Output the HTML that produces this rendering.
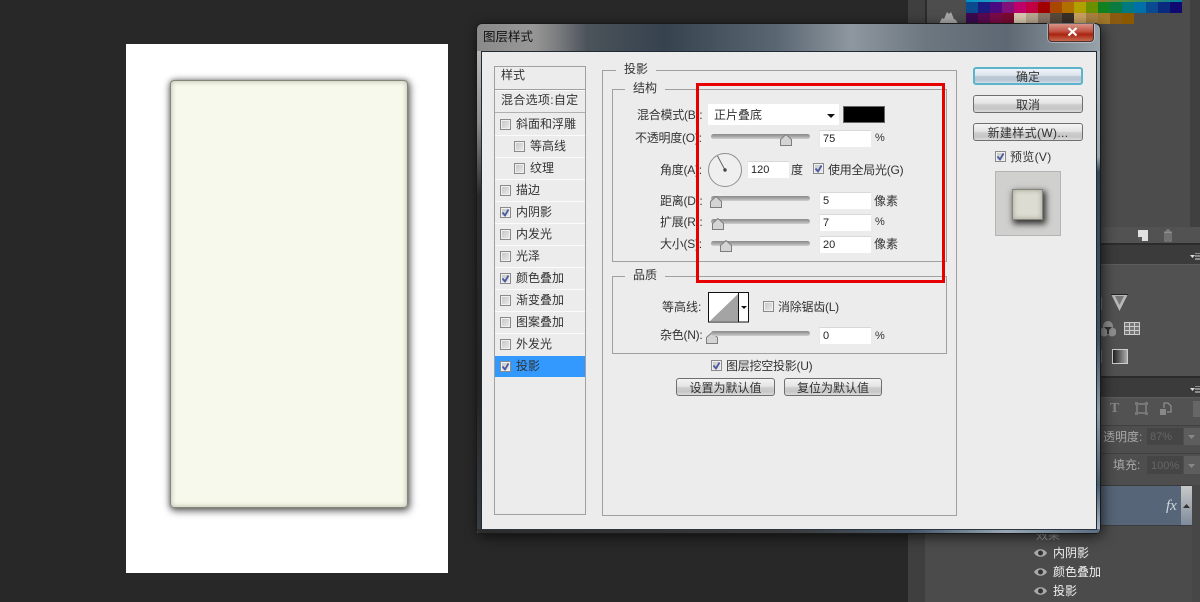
<!DOCTYPE html>
<html><head><meta charset="utf-8"><style>
html,body{margin:0;padding:0;background:#282828}
#r{position:relative;width:1200px;height:602px;overflow:hidden;background:#282828;font-family:"Liberation Sans","Noto Sans CJK SC",sans-serif;font-size:12px;color:#333}
#r div,#r span.t,#r svg{position:absolute}
.t{white-space:nowrap;line-height:16px;font-size:12px;color:#333}
.n{letter-spacing:-.25px}
.cb{width:9px;height:9px;border:1px solid #8a8a8a;background:linear-gradient(135deg,#c4c4c4,#ececec);box-shadow:inset 0 0 0 1px #f0f0f0}
.gb{border:1px solid #a0a0a0;box-sizing:border-box}
.lg{background:#ececec;padding:0 8px;height:16px;line-height:16px;white-space:nowrap}
.sl{left:711px;width:99px;height:5px;border-radius:3px;background:linear-gradient(#8a8a8a,#a8a8a8 50%,#d0d0d0)}
.in{background:#fff;box-sizing:border-box;border-top:1px solid #d8d8d8;border-left:1px solid #e8e8e8;padding-left:3px;line-height:17px;font-size:11px;color:#222}
.bt{border:1px solid #6f6f6f;border-radius:3px;box-sizing:border-box;background:linear-gradient(#f4f4f4,#e4e4e4 45%,#cdcdcd 55%,#c6c6c6 80%,#dcdcdc);text-align:center;line-height:18px;white-space:nowrap;font-size:12px;color:#333}
.sep{left:495px;width:90px;height:1px;background:#fbfbfb}
</style></head><body><div id="r">

<!-- right panels -->
<div style="left:908px;top:0;width:292px;height:602px;background:#4c4c4c"></div>
<div style="left:908px;top:0;width:17px;height:602px;background:#3f3f3f"></div>
<div style="left:925px;top:0;width:2px;height:602px;background:#2c2c2c"></div>
<div style="left:927px;top:0;width:37px;height:30px;background:#4d4d4d"></div>
<div style="left:1190px;top:0;width:10px;height:243px;background:#404040"></div>

<!-- swatches -->
<div style="left:966px;top:0;width:216px;height:2px;background:linear-gradient(90deg,#0090c8 0,#2aa0c0 15%,#803070 35%,#c06020 55%,#509040 75%,#0080a0 100%)"></div>
<svg style="left:966px;top:2px" width="216" height="22" shape-rendering="crispEdges">
<g>
<rect x="0" y="0" width="12" height="11" fill="#0a4a8e"/><rect x="12" y="0" width="12" height="11" fill="#1a1a80"/><rect x="24" y="0" width="12" height="11" fill="#4a0a80"/><rect x="36" y="0" width="12" height="11" fill="#80107a"/><rect x="48" y="0" width="12" height="11" fill="#c0006a"/><rect x="60" y="0" width="12" height="11" fill="#c00040"/><rect x="72" y="0" width="12" height="11" fill="#a00000"/><rect x="84" y="0" width="12" height="11" fill="#a84800"/><rect x="96" y="0" width="12" height="11" fill="#b07000"/><rect x="108" y="0" width="12" height="11" fill="#b0a000"/><rect x="120" y="0" width="12" height="11" fill="#6a9000"/><rect x="132" y="0" width="12" height="11" fill="#108020"/><rect x="144" y="0" width="12" height="11" fill="#0a7a40"/><rect x="156" y="0" width="12" height="11" fill="#007a80"/><rect x="168" y="0" width="12" height="11" fill="#0070a8"/><rect x="180" y="0" width="12" height="11" fill="#0a4a90"/><rect x="192" y="0" width="12" height="11" fill="#0a2a80"/><rect x="204" y="0" width="12" height="11" fill="#100a70"/>
<rect x="0" y="11" width="12" height="11" fill="#3a0a50"/><rect x="12" y="11" width="12" height="11" fill="#5a0a50"/><rect x="24" y="11" width="12" height="11" fill="#7a0a48"/><rect x="36" y="11" width="12" height="11" fill="#7a0a30"/><rect x="48" y="11" width="12" height="11" fill="#d8c8b0"/><rect x="60" y="11" width="12" height="11" fill="#b8a890"/><rect x="72" y="11" width="12" height="11" fill="#8a7868"/><rect x="84" y="11" width="12" height="11" fill="#5a4a3a"/><rect x="96" y="11" width="12" height="11" fill="#3a3028"/><rect x="108" y="11" width="12" height="11" fill="#c8a060"/><rect x="120" y="11" width="12" height="11" fill="#a88040"/><rect x="132" y="11" width="12" height="11" fill="#a07828"/><rect x="144" y="11" width="12" height="11" fill="#8a5a10"/><rect x="156" y="11" width="12" height="11" fill="#8a5800"/>
</g></svg>
<svg style="left:938px;top:11px" width="20" height="13"><path d="M1 13 L4 7 L6 8 L9 1 L11 3 L13 1 L16 8 L18 9 L20 13Z" fill="#a8a8a8"/></svg>

<!-- panel bars -->
<div style="left:1100px;top:227px;width:100px;height:16px;background:#525252"></div>
<div style="left:1100px;top:243px;width:100px;height:2px;background:#2c2c2c"></div>
<div style="left:1100px;top:245px;width:100px;height:19px;background:#3b3b3b"></div>
<div style="left:1100px;top:264px;width:100px;height:112px;background:#515151;border-top:1px solid #5c5c5c"></div>
<div style="left:1100px;top:376px;width:100px;height:2px;background:#2c2c2c"></div>
<div style="left:1100px;top:378px;width:100px;height:19px;background:#3b3b3b"></div>
<div style="left:1100px;top:397px;width:100px;height:28px;background:#525252;border-top:1px solid #5c5c5c"></div>
<div style="left:1100px;top:425px;width:100px;height:28px;background:#4e4e4e;border-top:1px solid #404040"></div>
<div style="left:1100px;top:453px;width:100px;height:32px;background:#4e4e4e;border-top:1px solid #404040"></div>
<div style="left:1000px;top:485px;width:192px;height:40px;background:#566678;border-top:1px solid #3a3a3a"></div>
<div style="left:1181px;top:486px;width:11px;height:39px;background:linear-gradient(#c8c8c8,#7f8c9c)"></div>
<div style="left:1192px;top:485px;width:8px;height:117px;background:#474747"></div>
<div style="left:925px;top:525px;width:267px;height:77px;background:#4b4b4b;border-top:1px solid #3c3c3c"></div>

<svg style="left:1136px;top:229px" width="46" height="14"><path d="M2 1H12V12H6L2 8Z" fill="#e0e0e0"/><path d="M2 8H6V12Z" fill="#555"/><path d="M28 3H36M31 3V1H33V3M29 4H35V12H29Z" fill="none" stroke="#8f8f8f"/><path d="M31 5V11M33 5V11" stroke="#8f8f8f"/></svg>
<svg style="left:1190px;top:253px" width="10" height="8"><path d="M0 2H5L2.500 5Z" fill="#ddd"/><path d="M5 0H10M5 3H10M5 6H10" stroke="#ddd"/></svg>
<svg style="left:1190px;top:386px" width="10" height="8"><path d="M0 2H5L2.500 5Z" fill="#ddd"/><path d="M5 0H10M5 3H10M5 6H10" stroke="#ddd"/></svg>
<svg style="left:1111px;top:294px" width="18" height="18"><path d="M0 0H17L8.500 17Z" fill="#b8b8b8"/><path d="M4 2H13L8.500 11Z" fill="#777"/><path d="M0 .5H17" stroke="#222"/></svg>
<svg style="left:1100px;top:321px" width="16" height="16"><circle cx="8" cy="5" r="5" fill="#8e8e8e"/><circle cx="4" cy="11" r="4.500" fill="#8e8e8e"/><circle cx="12" cy="11" r="4.500" fill="#8e8e8e"/><path d="M4 6H12L9 9V13H7V9Z" fill="#333"/></svg>
<svg style="left:1124px;top:322px" width="16" height="14" shape-rendering="crispEdges"><rect x=".5" y=".5" width="15" height="12" fill="#777" stroke="#ccc"/><path d="M.5 4.500H15.500M.5 8.500H15.500M5.500 .5V12.500M10.500 .5V12.500" stroke="#ccc"/></svg>
<div style="left:1112px;top:349px;width:14px;height:13px;border:1px solid #ccc;background:linear-gradient(90deg,#222,#aaa)"></div>
<div style="left:1100px;top:350px;width:2px;height:13px;background:#777"></div>
<div style="left:1100px;top:297px;width:2px;height:13px;background:#777"></div>

<span class="t" style="left:1110px;top:401px;font-family:'Liberation Serif',serif;font-weight:bold;font-size:14px;color:#888">T</span>
<svg style="left:1135px;top:402px" width="14" height="14"><rect x="2" y="2" width="9" height="9" fill="none" stroke="#999"/><path d="M0 0h3v3H0zM10 0h3v3h-3zM0 10h3v3H0zM10 10h3v3h-3z" fill="#777"/></svg>
<svg style="left:1159px;top:402px" width="14" height="14"><path d="M5 6V1H9L12 4V10H8" fill="none" stroke="#999"/><rect x="1" y="7" width="6" height="6" fill="#888"/></svg>
<div style="left:1193px;top:401px;width:7px;height:16px;background:#666"></div>

<span class="t" style="left:1103px;top:429px;color:#a8a8a8">透明度:</span>
<div style="left:1147px;top:428px;width:36px;height:17px;background:#454545"></div>
<span class="t" style="left:1150px;top:429px;color:#666;font-size:11px">87%</span>
<div style="left:1184px;top:428px;width:16px;height:17px;background:#5d5d5d"></div>
<svg style="left:1188px;top:435px" width="8" height="4"><path d="M0 0H7L3.500 4Z" fill="#888"/></svg>
<span class="t" style="left:1113px;top:457px;color:#a8a8a8">填充:</span>
<div style="left:1147px;top:456px;width:36px;height:18px;background:#454545"></div>
<span class="t" style="left:1151px;top:458px;color:#666;font-size:11px">100%</span>
<div style="left:1184px;top:456px;width:16px;height:18px;background:#5d5d5d"></div>
<svg style="left:1188px;top:464px" width="8" height="4"><path d="M0 0H7L3.500 4Z" fill="#888"/></svg>
<span class="t" style="left:1166px;top:498px;font-family:'Liberation Serif',serif;font-style:italic;font-size:15px;color:#d0d8e0">fx</span>
<svg style="left:1183px;top:504px" width="7" height="4"><path d="M0 4H7L3.500 0Z" fill="#333"/></svg>

<span class="t" style="left:1036px;top:527px;color:#9a9a9a">效果</span>
<span class="t" style="left:1053px;top:545px;color:#f0f0f0">内阴影</span>
<span class="t" style="left:1053px;top:564px;color:#f0f0f0">颜色叠加</span>
<span class="t" style="left:1053px;top:583px;color:#f0f0f0">投影</span>
<svg style="left:1034px;top:548px" width="13" height="50"><g fill="#aaa"><path d="M0 5C3 0 10 0 13 5C10 10 3 10 0 5Z"/><path d="M0 24C3 19 10 19 13 24C10 29 3 29 0 24Z"/><path d="M0 43C3 38 10 38 13 43C10 48 3 48 0 43Z"/></g><g fill="#333"><circle cx="6.500" cy="5" r="2.500"/><circle cx="6.500" cy="24" r="2.500"/><circle cx="6.500" cy="43" r="2.500"/></g></svg>

<!-- canvas -->
<div style="left:126px;top:44px;width:322px;height:529px;background:#fff"></div>
<div style="left:170px;top:80px;width:238px;height:428px;box-sizing:border-box;border-radius:4px;background:#f7f9ec;box-shadow:1px 2px 8px 1px rgba(0,0,0,.6),0 0 5px rgba(0,0,0,.25),inset 0 0 0 1px #85857c,inset 0 0 5px 2px #c6c7b6"></div>

<!-- dialog -->
<div style="left:477px;top:24px;width:623px;height:509px;border-radius:5px;box-shadow:0 0 0 1px #1a1a1a,2px 3px 14px rgba(0,0,0,.7);background:linear-gradient(90deg,#4a4a4a 0,#686868 8%,#4e555c 16%,#36424e 30%,#5a6672 48%,#8e979f 60%,#6d7780 72%,#5d6873 85%,#98a2aa 100%)"></div>
<div style="left:477px;top:24px;width:110px;height:27px;border-radius:5px 0 0 0;background:linear-gradient(90deg,#8a8a8a,#979797 50%,rgba(120,120,120,0))"></div>
<div style="left:477px;top:51px;width:4px;height:482px;background:linear-gradient(#b8b8b8,#8a8a8a 15%,#2a2a2a 30%,#232323 70%,#3a3f44)"></div>
<div style="left:1096px;top:51px;width:4px;height:482px;border-radius:0 0 4px 0;background:linear-gradient(#a8b2ba 0,#9aa6b0 22%,#34465a 25%,#3e5064 60%,#8a9aa8 75%,#4a5c70 90%,#b0bcc8)"></div>
<div style="left:477px;top:529px;width:623px;height:4px;border-radius:0 0 5px 5px;background:linear-gradient(90deg,#2c2c2c 0,#3a3a3a 50%,#46576a 70%,#9aa8b4 85%,#5a6c80)"></div>
<div style="left:481px;top:51px;width:614px;height:477px;background:#ececec;border:1px solid #1f2a34;border-bottom-color:#2a3642"></div>
<span class="t" style="left:483px;top:29px;color:#111;font-size:12.500px">图层样式</span>

<!-- close -->
<div style="left:1048px;top:24px;width:46px;height:18px;box-sizing:border-box;border:1px solid #4a3030;border-top:0;border-radius:0 0 4px 4px;background:linear-gradient(#d89488,#c05040 45%,#a82410 60%,#c86a50);box-shadow:0 0 0 1px rgba(255,255,255,.35)"></div>
<svg style="left:1067px;top:27px" width="11" height="10"><path d="M1.500 1L9.500 8.500M9.500 1L1.500 8.500" stroke="#fff" stroke-width="2.200"/></svg>

<!-- left list -->
<div class="gb" style="left:494px;top:66px;width:92px;height:449px"></div>
<span class="t" style="left:501px;top:67px">样式</span>
<div style="left:495px;top:89px;width:90px;height:1px;background:#a0a0a0"></div>
<div style="left:495px;top:90px;width:90px;height:1px;background:#fbfbfb"></div>
<span class="t" style="left:501px;top:92px;letter-spacing:.3px">混合选项:自定</span>
<div class="sep" style="top:112px;background:#b0b0b0"></div>
<div class="sep" style="top:135px"></div><div class="sep" style="top:157px"></div><div class="sep" style="top:179px"></div><div class="sep" style="top:201px"></div><div class="sep" style="top:223px"></div><div class="sep" style="top:245px"></div><div class="sep" style="top:267px"></div><div class="sep" style="top:289px"></div><div class="sep" style="top:311px"></div><div class="sep" style="top:333px"></div>
<div style="left:495px;top:356px;width:90px;height:21px;background:#3399ff"></div>

<div class="cb" style="left:500px;top:119px"></div><span class="t" style="left:516px;top:116px">斜面和浮雕</span>
<div class="cb" style="left:514px;top:141px"></div><span class="t" style="left:530px;top:138px">等高线</span>
<div class="cb" style="left:514px;top:163px"></div><span class="t" style="left:530px;top:160px">纹理</span>
<div class="cb" style="left:500px;top:185px"></div><span class="t" style="left:516px;top:182px">描边</span>
<div class="cb" style="left:500px;top:207px"></div><span class="t" style="left:516px;top:204px">内阴影</span>
<div class="cb" style="left:500px;top:229px"></div><span class="t" style="left:516px;top:226px">内发光</span>
<div class="cb" style="left:500px;top:251px"></div><span class="t" style="left:516px;top:248px">光泽</span>
<div class="cb" style="left:500px;top:273px"></div><span class="t" style="left:516px;top:270px">颜色叠加</span>
<div class="cb" style="left:500px;top:295px"></div><span class="t" style="left:516px;top:292px">渐变叠加</span>
<div class="cb" style="left:500px;top:317px"></div><span class="t" style="left:516px;top:314px">图案叠加</span>
<div class="cb" style="left:500px;top:339px"></div><span class="t" style="left:516px;top:336px">外发光</span>
<div class="cb" style="left:500px;top:361px"></div><span class="t" style="left:516px;top:358px">投影</span>
<svg style="left:500px;top:207px" width="11" height="176"><g fill="none" stroke="#4a5aa0" stroke-width="1.800"><path d="M2.500 5.500L5 8.500L8.500 2.500"/><path d="M2.500 71.500L5 74.500L8.500 68.500"/><path d="M2.500 159.500L5 162.500L8.500 156.500"/></g></svg>

<!-- main groups -->
<div class="gb" style="left:602px;top:70px;width:355px;height:446px"></div>
<div class="lg" style="left:616px;top:61px">投影</div>
<div class="gb" style="left:612px;top:89px;width:335px;height:173px"></div>
<div class="lg" style="left:625px;top:80px">结构</div>
<div class="gb" style="left:612px;top:276px;width:335px;height:78px"></div>
<div class="lg" style="left:625px;top:267px">品质</div>

<span class="t n" style="left:637px;top:107px">混合模式(B):</span>
<div style="left:708px;top:104px;width:131px;height:21px;background:#fff"></div>
<span class="t" style="left:714px;top:107px">正片叠底</span>
<svg style="left:827px;top:114px" width="8" height="4"><path d="M0 0H8L4 4Z" fill="#111"/></svg>
<div style="left:843px;top:106px;width:42px;height:17px;box-sizing:border-box;background:#000;border:1px solid #666"></div>

<span class="t n" style="left:635px;top:130px">不透明度(O):</span>
<div class="sl" style="top:134px"></div>
<div class="in" style="left:819px;top:130px;width:52px;height:17px">75</div>
<span class="t" style="left:875px;top:130px;font-size:11px">%</span>

<span class="t n" style="left:660px;top:162px">角度(A):</span>
<svg style="left:707px;top:152px" width="36" height="36"><circle cx="18" cy="18" r="16.500" fill="#efefef" stroke="#8e8e8e"/><path d="M18 18L10.500 4" stroke="#666"/><circle cx="18" cy="18" r="1.700" fill="#444"/></svg>
<div class="in" style="left:747px;top:161px;width:42px;height:17px">120</div>
<span class="t" style="left:791px;top:162px">度</span>
<div class="cb" style="left:813px;top:163px"></div>
<span class="t n" style="left:828px;top:162px">使用全局光(G)</span>

<span class="t n" style="left:660px;top:193px">距离(D):</span>
<div class="sl" style="top:196px"></div>
<div class="in" style="left:819px;top:192px;width:52px;height:17px">5</div>
<span class="t" style="left:874px;top:193px">像素</span>

<span class="t n" style="left:660px;top:214px">扩展(R):</span>
<div class="sl" style="top:219px"></div>
<div class="in" style="left:819px;top:214px;width:52px;height:17px">7</div>
<span class="t" style="left:875px;top:214px;font-size:11px">%</span>

<span class="t n" style="left:660px;top:236px">大小(S):</span>
<div class="sl" style="top:241px"></div>
<div class="in" style="left:819px;top:236px;width:52px;height:17px">20</div>
<span class="t" style="left:874px;top:236px">像素</span>

<svg style="left:780px;top:134px" width="12" height="12"><path d="M.5 11.500V5.500L6 .5L11.500 5.500V11.500Z" fill="#d4d4d4" stroke="#7e7e7e"/></svg>
<svg style="left:710px;top:196px" width="12" height="12"><path d="M.5 11.500V5.500L6 .5L11.500 5.500V11.500Z" fill="#d4d4d4" stroke="#7e7e7e"/></svg>
<svg style="left:712px;top:218px" width="12" height="12"><path d="M.5 11.500V5.500L6 .5L11.500 5.500V11.500Z" fill="#d4d4d4" stroke="#7e7e7e"/></svg>
<svg style="left:720px;top:240px" width="12" height="12"><path d="M.5 11.500V5.500L6 .5L11.500 5.500V11.500Z" fill="#d4d4d4" stroke="#7e7e7e"/></svg>
<svg style="left:706px;top:332px" width="12" height="12"><path d="M.5 11.500V5.500L6 .5L11.500 5.500V11.500Z" fill="#d4d4d4" stroke="#7e7e7e"/></svg>

<span class="t" style="left:662px;top:299px">等高线:</span>
<svg style="left:708px;top:292px" width="42" height="31"><rect x=".5" y=".5" width="40" height="29.500" fill="#fff" stroke="#111"/><path d="M2 29L30 2V29Z" fill="#a4a4a4"/><path d="M30.500 .5V30" stroke="#111"/><path d="M33 14H39L36 17Z" fill="#111"/></svg>
<div class="cb" style="left:763px;top:301px"></div>
<span class="t n" style="left:778px;top:299px">消除锯齿(L)</span>

<span class="t n" style="left:660px;top:327px">杂色(N):</span>
<div class="sl" style="top:331px"></div>
<div class="in" style="left:819px;top:327px;width:52px;height:17px">0</div>
<span class="t" style="left:875px;top:328px;font-size:11px">%</span>

<div class="cb" style="left:711px;top:360px"></div>
<span class="t n" style="left:726px;top:358px">图层挖空投影(U)</span>
<svg style="left:813px;top:163px" width="11" height="11"><path d="M2.500 5.500L5 8.500L8.500 2.500" fill="none" stroke="#4a5aa0" stroke-width="1.800"/></svg>
<svg style="left:711px;top:360px" width="11" height="11"><path d="M2.500 5.500L5 8.500L8.500 2.500" fill="none" stroke="#4a5aa0" stroke-width="1.800"/></svg>

<div class="bt" style="left:676px;top:378px;width:99px;height:18px">设置为默认值</div>
<div class="bt" style="left:784px;top:378px;width:98px;height:18px">复位为默认值</div>

<!-- right column -->
<div class="bt" style="left:973px;top:67px;width:110px;height:18px;border:2px solid #5cb4cc;line-height:17px;background:linear-gradient(#eef3f8,#dde4ec 45%,#bcc8d4 55%,#b8c6d4 80%,#d4dee8)">确定</div>
<div class="bt" style="left:973px;top:95px;width:110px;height:18px">取消</div>
<div class="bt" style="left:973px;top:123px;width:110px;height:18px;letter-spacing:.35px">新建样式(W)...</div>
<div class="cb" style="left:995px;top:151px"></div>
<svg style="left:995px;top:151px" width="11" height="11"><path d="M2.500 5.500L5 8.500L8.500 2.500" fill="none" stroke="#4a5aa0" stroke-width="1.800"/></svg>
<span class="t" style="left:1010px;top:149px;letter-spacing:.3px">预览(V)</span>
<div style="left:995px;top:171px;width:66px;height:65px;box-sizing:border-box;background:#d0d0ce;border:1px solid #b4b4b4"></div>
<div style="left:1012px;top:189px;width:31px;height:31px;box-sizing:border-box;background:#dcdcd2;box-shadow:2px 3px 6px 1px rgba(0,0,0,.75),inset 0 0 0 1px #85857d,inset 0 0 4px 2px #b0b0a4"></div>

<!-- red box -->
<div style="left:696px;top:83px;width:249px;height:200px;box-sizing:border-box;border:3px solid #e60000"></div>

</div></body></html>
